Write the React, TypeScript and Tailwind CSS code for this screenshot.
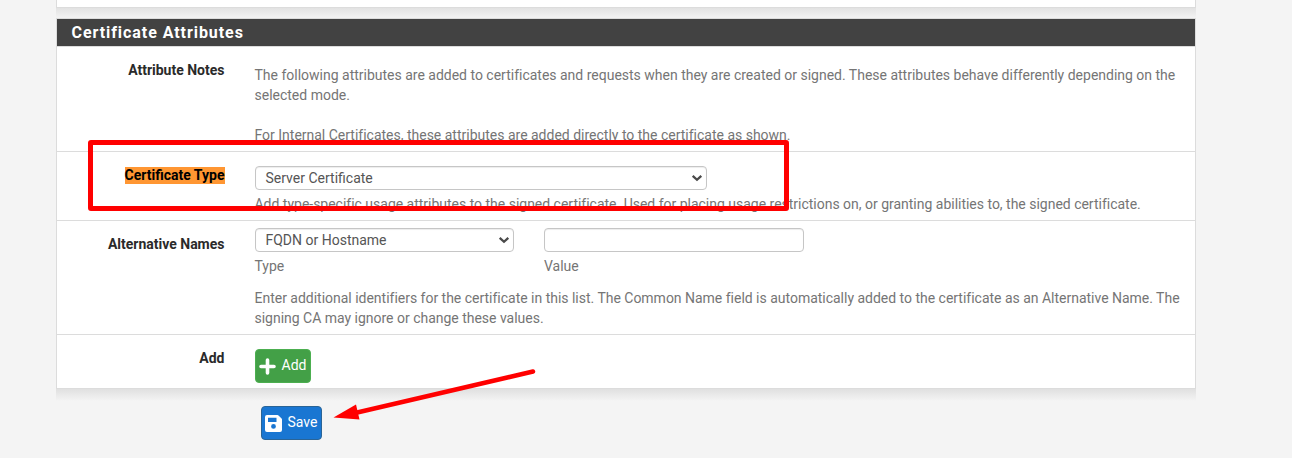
import type { ReactNode } from 'react';

function Row({ label, size, children }: { label: ReactNode; size: string; children: ReactNode }) {
  return (
    <div className={`flex items-start border-b border-[#dcdcdc] ${size}`}>
      <div className="w-[167.500px] shrink-0 pt-[13px] text-right font-bold leading-[20px] text-[#2a2a2a]">{label}</div>
      <div className="ml-[30.500px] min-w-0 flex-1">{children}</div>
    </div>
  );
}

function Select({ text, width }: { text: string; width: string }) {
  return (
    <div className={`flex h-[24px] items-center justify-between rounded-[4px] border border-[#c6c6c6] bg-white pl-[9.500px] pr-[3px] text-[#555] shadow-[inset_0_1px_1px_rgba(0,0,0,0.075)] ${width}`}>
      <span>{text}</span>
      <svg width="12" height="12" viewBox="0 0 12 12" fill="none" stroke="#4a4a4a" strokeWidth="2.300">
        <path d="M1.700 3.900l4.300 3.900 4.300-3.900" />
      </svg>
    </div>
  );
}

export default function App() {
  return (
    <div className="relative h-[458px] w-[1292px] overflow-hidden bg-[#f4f4f4] pl-[56px] font-['Roboto',sans-serif] text-[14px] leading-[20px] text-[#757575]">
      <div className="w-[1140px]">
        <div className="h-[8px] border border-t-0 border-[#dcdcdc] bg-white" />
        <div className="h-[10px] bg-linear-to-b from-[#e2e2e2] to-[#f3f3f3]" />
        <div className="border border-b-0 border-[#dcdcdc] bg-white">
          <h2 className="h-[28px] border-b border-[#dcdcdc] bg-[#424242] bg-clip-padding pl-[14.500px] text-[16px] font-bold leading-[27px] tracking-[0.940px] text-white">
            Certificate Attributes
          </h2>
          <Row label="Attribute Notes" size="h-[105px]">
            <div className="-ml-[0.500px] whitespace-nowrap pt-[18px] tracking-[-0.005px]">
              <p>The following attributes are added to certificates and requests when they are created or signed. These attributes behave differently depending on the</p>
              <p>selected mode.</p>
              <p className="mt-[20px]">For Internal Certificates, these attributes are added directly to the certificate as shown.</p>
            </div>
          </Row>
          <Row label={<span className="bg-[#ff9632] pb-px text-black">Certificate Type</span>} size="h-[69px]">
            <div className="whitespace-nowrap pt-[14px]">
              <Select text="Server Certificate" width="w-[452px]" />
              <p className="-ml-[0.500px] mt-[4px] tracking-[-0.012px]">Add type-specific usage attributes to the signed certificate. Used for placing usage restrictions on, or granting abilities to, the signed certificate.</p>
            </div>
          </Row>
          <Row label="Alternative Names" size="h-[114px]">
            <div className="whitespace-nowrap pt-[7px]">
              <div className="flex gap-[30px]">
                <div>
                  <Select text="FQDN or Hostname" width="w-[259px]" />
                  <p className="-ml-[0.500px] mt-[4px]">Type</p>
                </div>
                <div>
                  <div className="h-[24px] w-[260px] rounded-[4px] border border-[#c6c6c6] shadow-[inset_0_1px_1px_rgba(0,0,0,0.075)]" />
                  <p className="mt-[4px]">Value</p>
                </div>
              </div>
              <div className="-ml-[0.500px] mt-[12px] tracking-[-0.014px]">
                <p>Enter additional identifiers for the certificate in this list. The Common Name field is automatically added to the certificate as an Alternative Name. The</p>
                <p>signing CA may ignore or change these values.</p>
              </div>
            </div>
          </Row>
          <Row label="Add" size="h-[54px]">
            <button className="mt-[14px] flex h-[34px] w-[56px] items-center rounded-[4px] border border-[#4caf50] bg-[#43a047] pl-[3px] text-white">
              <svg width="17" height="17" viewBox="0 0 17 17" fill="none" stroke="white" strokeWidth="3.600" strokeLinecap="round" className="mt-px">
                <path d="M8.500 2v13M2 8.500h13" />
              </svg>
              <span className="ml-[5.500px] pb-[3px]">Add</span>
            </button>
          </Row>
        </div>
        <div className="h-[12px] bg-linear-to-b from-[#e0e0e0] to-[#f4f4f4]" />
        <button className="ml-[205px] mt-[5px] flex h-[34px] w-[61px] items-center rounded-[4px] border border-[#2a6496] bg-[#1976d2] pl-[3px] text-white">
          <svg width="17" height="17" viewBox="0 0 17 17" fill="white" className="mt-[1px]">
            <path fillRule="evenodd" d="M2 0h10.500q.6 0 1 .4l3.100 3.100q.4.400.4 1V15q0 2-2 2H2q-2 0-2-2V2Q0 0 2 0zM3 2.700v4.300h8.500V2.700zM8.500 9a2.400 2.400 0 1 0 0 4.800 2.400 2.400 0 0 0 0-4.800z" />
          </svg>
          <span className="ml-[5.500px] pb-[3px]">Save</span>
        </button>
      </div>
      <div className="absolute left-[88px] top-[140px] h-[71px] w-[701px] rounded-[3px] border-[5px] border-[#ff0000]" />
      <svg className="absolute left-[330px] top-[365px]" width="210" height="60" viewBox="330 365 210 60">
        <path d="M533 371.500L355 413" stroke="#ff0000" strokeWidth="4.500" strokeLinecap="round" />
        <path d="M333.500 417.500L356 404.500l3.500 15z" fill="#ff0000" />
      </svg>
    </div>
  );
}
